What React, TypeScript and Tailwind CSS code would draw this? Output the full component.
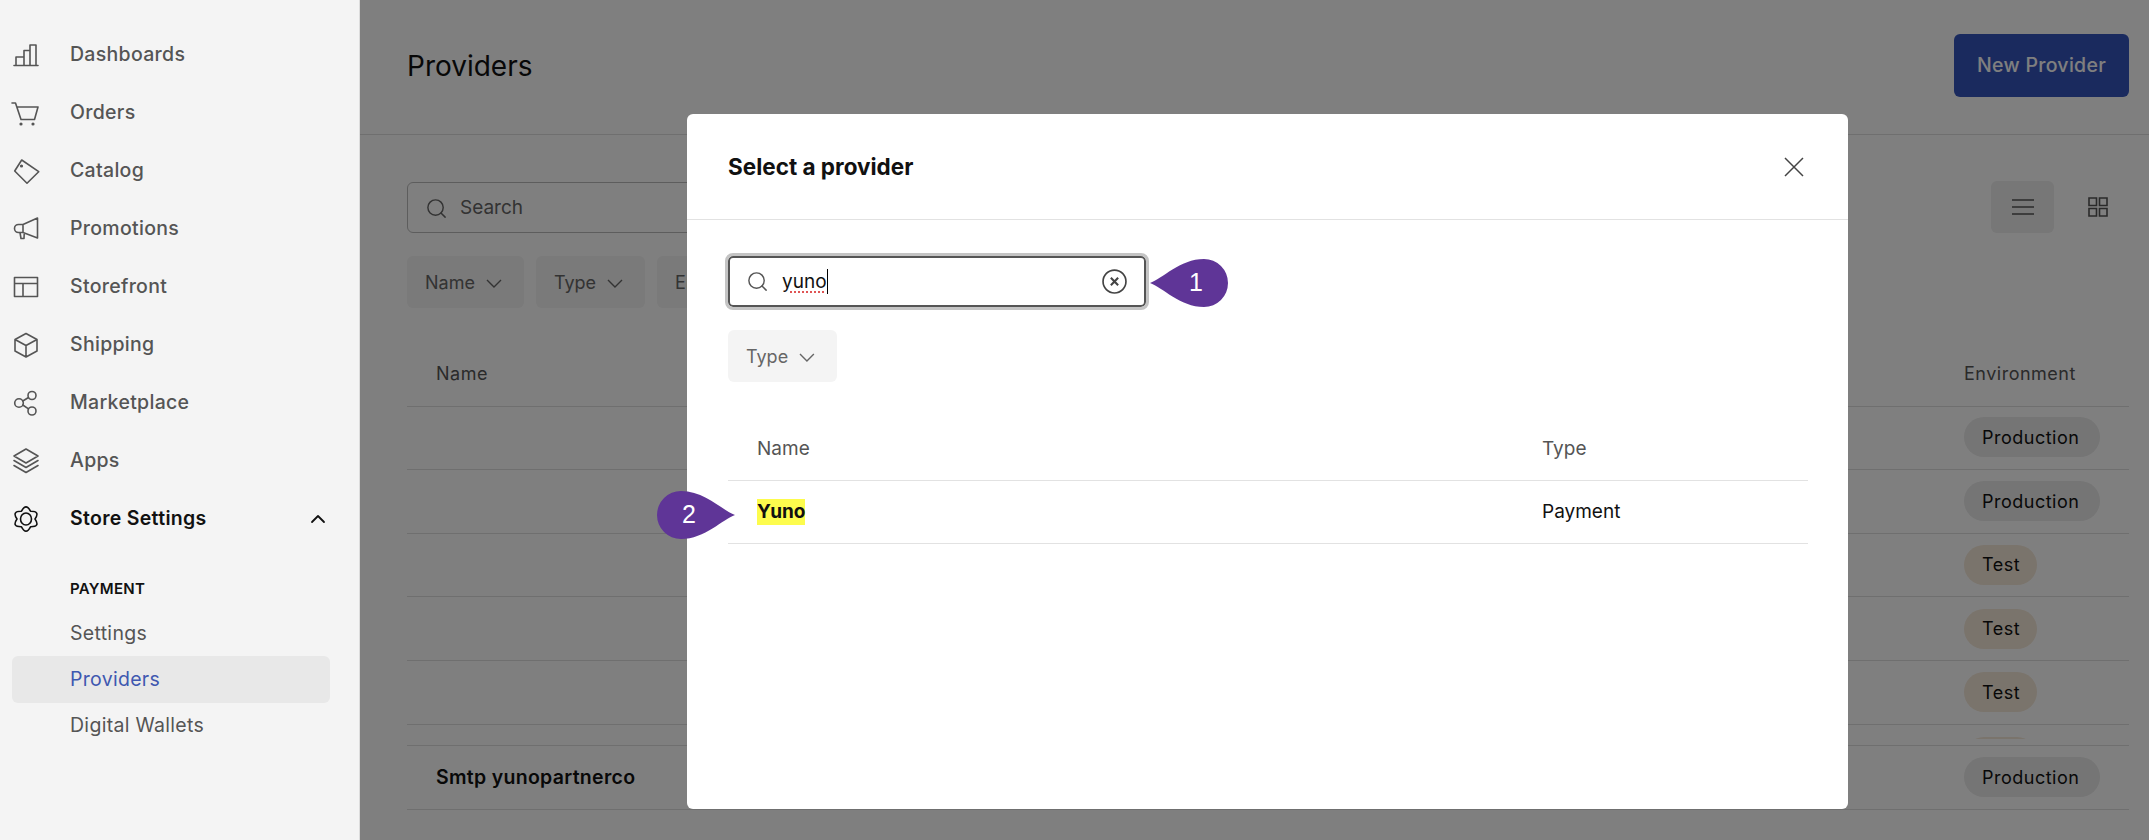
import React from "react";
import { ChevronUp, Search } from "lucide-react";

const PURPLE = "#5f3597";

const icons: Record<string, React.ReactNode> = {
    dashboards: <path d="M0 22.5h24M2 22v-8h8M10 22V7.5h6V22M16 22V2h6v20" />,
    orders: (
        <>
            <path d="M-2 2h3.5L7 18.5h13.5L24 6H3" />
            <circle cx="7" cy="23" r="0.8" fill="currentColor" />
            <circle cx="19" cy="23" r="0.8" fill="currentColor" />
        </>
    ),
    catalog: (
        <>
            <path d="M0.7 12 7.7 1 24.7 12.7 13 24.2Z" />
            <circle cx="7.5" cy="7" r="0.8" fill="currentColor" />
        </>
    ),
    promotions: <path d="M23.5 1 9 7.5H4.5a4 4 0 0 0 0 8H9L23.5 21ZM9 7.5v8M6 15.5l1 6h3l.2-4.5" />,
    storefront: <path d="M.5 2.5h23v19H.5ZM.5 8.5h23M9 8.5v13" />,
    shipping: <path d="M12 .5 23 6.5v11.5L12 24 1 18V6.5ZM1 6.5l11 6 11-6M12 12.5V24" />,
    marketplace: (
        <>
            <circle cx="18" cy="4.5" r="4" />
            <circle cx="5" cy="12" r="4.3" />
            <circle cx="18" cy="20" r="4" />
            <path d="M8.8 10 14.5 6.5M8.8 14l5.7 3.8" />
        </>
    ),
    apps: <path d="M12 0 24 7 12 14 0 7ZM0 11.5 12 18.5 24 11.5M0 16.5 12 23.5 24 16.5" />,
    settings: (
        <>
            <path d="M21 12Q26.5 20 16.5 19.8 12 28.5 7.5 19.8-2.5 20 3 12-2.5 4 7.5 4.2 12-4.5 16.5 4.2 26.5 4 21 12Z" />
            <ellipse cx="12" cy="12" rx="5.5" ry="6" />
        </>
    ),
};

const navItems = [
    { key: "dashboards", label: "Dashboards" },
    { key: "orders", label: "Orders" },
    { key: "catalog", label: "Catalog" },
    { key: "promotions", label: "Promotions" },
    { key: "storefront", label: "Storefront" },
    { key: "shipping", label: "Shipping" },
    { key: "marketplace", label: "Marketplace" },
    { key: "apps", label: "Apps" },
];

function NavIcon({ name }: { name: string }) {
    return (
        <svg viewBox="0 0 24 24" className="w-6 h-6 shrink-0 overflow-visible" fill="none" stroke="currentColor" strokeWidth="1.6" strokeLinejoin="round" strokeLinecap="round">
            {icons[name]}
        </svg>
    );
}

function Sidebar() {
    return (
        <aside className="w-[360px] shrink-0 h-full bg-[#f4f4f4] border-r border-[#dcdcdc] pt-[26px] text-[19.5px] tracking-[0.3px]">
            {navItems.map((item) => (
                <div key={item.key} className="h-[58px] flex items-center gap-8 pl-[14px] text-[#555555] font-medium">
                    <NavIcon name={item.key} />
                    <span>{item.label}</span>
                </div>
            ))}
            <div className="h-[58px] flex items-center gap-8 pl-[14px] pr-[29px] text-[#111111] font-semibold">
                <NavIcon name="settings" />
                <span className="flex-1">Store Settings</span>
                <ChevronUp className="w-[24px] h-[24px]" strokeWidth={1.8} />
            </div>
            <div className="pt-[26px] pl-[70px] text-[15px] font-semibold text-[#111111] h-[57px] flex items-center">PAYMENT</div>
            <div className="h-[51px] pt-[6px] pl-[70px] flex items-center text-[#555555]">Settings</div>
            <div className="h-[47px] ml-[12px] mr-[29px] pl-[58px] flex items-center rounded-md bg-[#e8e8e8] text-[#3f58b0]">Providers</div>
            <div className="h-[45px] pl-[70px] flex items-center text-[#555555]">Digital Wallets</div>
        </aside>
    );
}

function Chip({ label, className = "" }: { label: string; className?: string }) {
    return (
        <div className={`h-[52px] flex items-center gap-[11px] pl-[18px] pr-[22px] rounded-md bg-[#f4f4f4] text-[#666666] text-[18px] ${className}`}>
            {label}
            <svg viewBox="0 0 16 9" className="w-[16px] h-[9px] mt-[2px]" fill="none" stroke="currentColor" strokeWidth="1.4">
                <path d="M1 1l7 7 7-7" />
            </svg>
        </div>
    );
}

function Pill({ env, blank }: { env: string; blank?: boolean }) {
    const tone = env === "Test" ? "bg-[#f5e8d8] w-[73px]" : "bg-[#eaeaea] w-[136px]";
    return <span className={`h-[40px] flex items-center pl-[18px] rounded-full text-[#111111] text-[18px] tracking-[0.5px] ${tone}`}>{blank ? "" : env}</span>;
}

function ProviderRow({ env, name = "", clip = false }: { env: string; name?: string; clip?: boolean }) {
    return (
        <div className={`h-[63.75px] grid grid-cols-[1557px_1fr] items-center border-[#dedede] ${clip ? "" : "border-b"}`}>
            <span className="pl-[29px] text-[19.5px] font-semibold tracking-[0.3px] text-[#111111]">{name}</span>
            <Pill env={env} blank={clip} />
        </div>
    );
}

function ProvidersPage() {
    return (
        <main className="relative flex-1 h-full bg-white overflow-hidden">
            <header className="h-[135px] pl-[47px] pr-[20px] flex items-center justify-between border-b border-[#dedede]">
                <h1 className="text-[28px] text-[#111111] -mt-[3px]">Providers</h1>
                <button className="w-[175px] h-[63px] -mt-[3px] rounded-md bg-[#3455bd] text-white text-[19.5px] font-medium tracking-[0.3px]">New Provider</button>
            </header>
            <div className="pl-[47px] pr-[20px]">
                <div className="mt-[46px] h-[52px] flex items-center justify-between">
                    <div className="w-[640px] h-[51px] flex items-center gap-[12px] pl-[17px] pt-[2px] rounded-md border border-[#bbbbbb] text-[#666666] text-[19px]">
                        <Search className="w-[23px] h-[23px]" strokeWidth={1.5} />
                        Search
                    </div>
                    <div className="flex items-center gap-[34px] pr-[21px]">
                        <div className="w-[63px] h-[52px] rounded-md bg-[#eeeeee] flex items-center justify-center">
                            <svg viewBox="0 0 24 18" className="w-[24px] h-[18px]" fill="none" stroke="#555555" strokeWidth="1.6">
                                <path d="M1 2h22M1 9h22M1 16h22" />
                            </svg>
                        </div>
                        <svg viewBox="0 0 20 20" className="w-[20px] h-[20px]" fill="none" stroke="#555555" strokeWidth="1.6">
                            <path d="M1 1h7.5v7.5H1ZM11.5 1H19v7.5h-7.5ZM1 11.5h7.5V19H1ZM11.5 11.5H19V19h-7.5Z" />
                        </svg>
                    </div>
                </div>
                <div className="mt-[23px] flex gap-[12px]">
                    <Chip label="Name" />
                    <Chip label="Type" />
                    <Chip label="Environment" />
                </div>
                <div className="mt-[33px] h-[66px] grid grid-cols-[1557px_1fr] items-center border-b border-[#dedede] text-[18px] text-[#555555] tracking-[0.5px]">
                    <span className="pl-[29px]">Name</span>
                    <span>Environment</span>
                </div>
                <div className="h-[333px] overflow-hidden -mt-px">
                    <ProviderRow env="Production" />
                    <ProviderRow env="Production" />
                    <ProviderRow env="Test" />
                    <ProviderRow env="Test" />
                    <ProviderRow env="Test" />
                    <ProviderRow env="Test" clip />
                </div>
                <div className="mt-[6px] border-t border-[#dedede]">
                    <ProviderRow env="Production" name="Smtp yunopartnerco" />
                </div>
            </div>
            <div className="absolute inset-0 bg-black/50" />
        </main>
    );
}

function Marker({ n, flip, className }: { n: string; flip?: boolean; className: string }) {
    return (
        <div className={`absolute w-[78px] h-[48px] ${className}`}>
            <svg viewBox="0 0 78 48" className={`w-full h-full ${flip ? "-scale-x-100" : ""}`}>
                <path d="M0 24C12 20 30 0 54 0A24 24 0 0 1 54 48C30 48 12 28 0 24Z" fill={PURPLE} />
            </svg>
            <span className={`absolute top-0 h-[48px] w-[48px] flex items-center justify-center text-white text-[25px] font-['Liberation_Sans',sans-serif] ${flip ? "left-[8px]" : "right-[8px]"}`}>{n}</span>
        </div>
    );
}

function ProviderModal() {
    return (
        <div className="absolute left-[687px] top-[114px] w-[1161px] h-[695px] rounded-md bg-white">
            <div className="h-[106px] pl-[41px] pr-[44px] flex items-center justify-between border-b border-[#e2e2e2]">
                <h2 className="text-[22.5px] font-bold text-[#111111]">Select a provider</h2>
                <svg viewBox="0 0 20 20" className="w-[20px] h-[20px]" fill="none" stroke="#444444" strokeWidth="1.5">
                    <path d="M1 1l18 18M19 1 1 19" />
                </svg>
            </div>
            <div className="px-[41px] pt-[36px] pr-[40px]">
                <div className="w-[418px] h-[51px] flex items-center pl-[16px] pr-[17px] rounded-[5px] border-2 border-[#555555] outline-[3px] outline-[#c4c4c4] text-[#111111] text-[19px]">
                    <Search className="w-[23px] h-[23px] text-[#555555] shrink-0" strokeWidth={1.5} />
                    <span className="ml-[13px] underline decoration-dotted decoration-[#e05555] underline-offset-4 leading-none">yuno</span>
                    <span className="w-px h-[25px] bg-black" />
                    <svg viewBox="0 0 24 24" className="w-[25px] h-[25px] ml-auto shrink-0" fill="none" stroke="#444444" strokeWidth="1.6">
                        <circle cx="12" cy="12" r="11" />
                        <path d="M8.5 8.5l7 7M15.5 8.5l-7 7" strokeWidth="2" />
                    </svg>
                </div>
                <Chip label="Type" className="mt-[23px] w-[109px]" />
                <div className="mt-[33px] h-[66px] pt-[3px] grid grid-cols-[814px_1fr] items-center border-b border-[#e2e2e2] text-[19px] text-[#555555]">
                    <span className="pl-[29px]">Name</span>
                    <span>Type</span>
                </div>
                <div className="h-[63px] pt-px grid grid-cols-[814px_1fr] items-center border-b border-[#e2e2e2] text-[19px] text-[#111111]">
                    <span className="pl-[29px]">
                        <span className="inline-block h-[26px] leading-[26px] bg-[#fdfc4d] font-bold">Yuno</span>
                    </span>
                    <span>Payment</span>
                </div>
            </div>
            <Marker n="1" className="left-[463px] top-[145px]" />
            <Marker n="2" flip className="-left-[30px] top-[377px]" />
        </div>
    );
}

export default function App() {
    return (
        <div className="relative flex h-screen w-full overflow-hidden font-['Inter',sans-serif]">
            <Sidebar />
            <ProvidersPage />
            <ProviderModal />
        </div>
    );
}
